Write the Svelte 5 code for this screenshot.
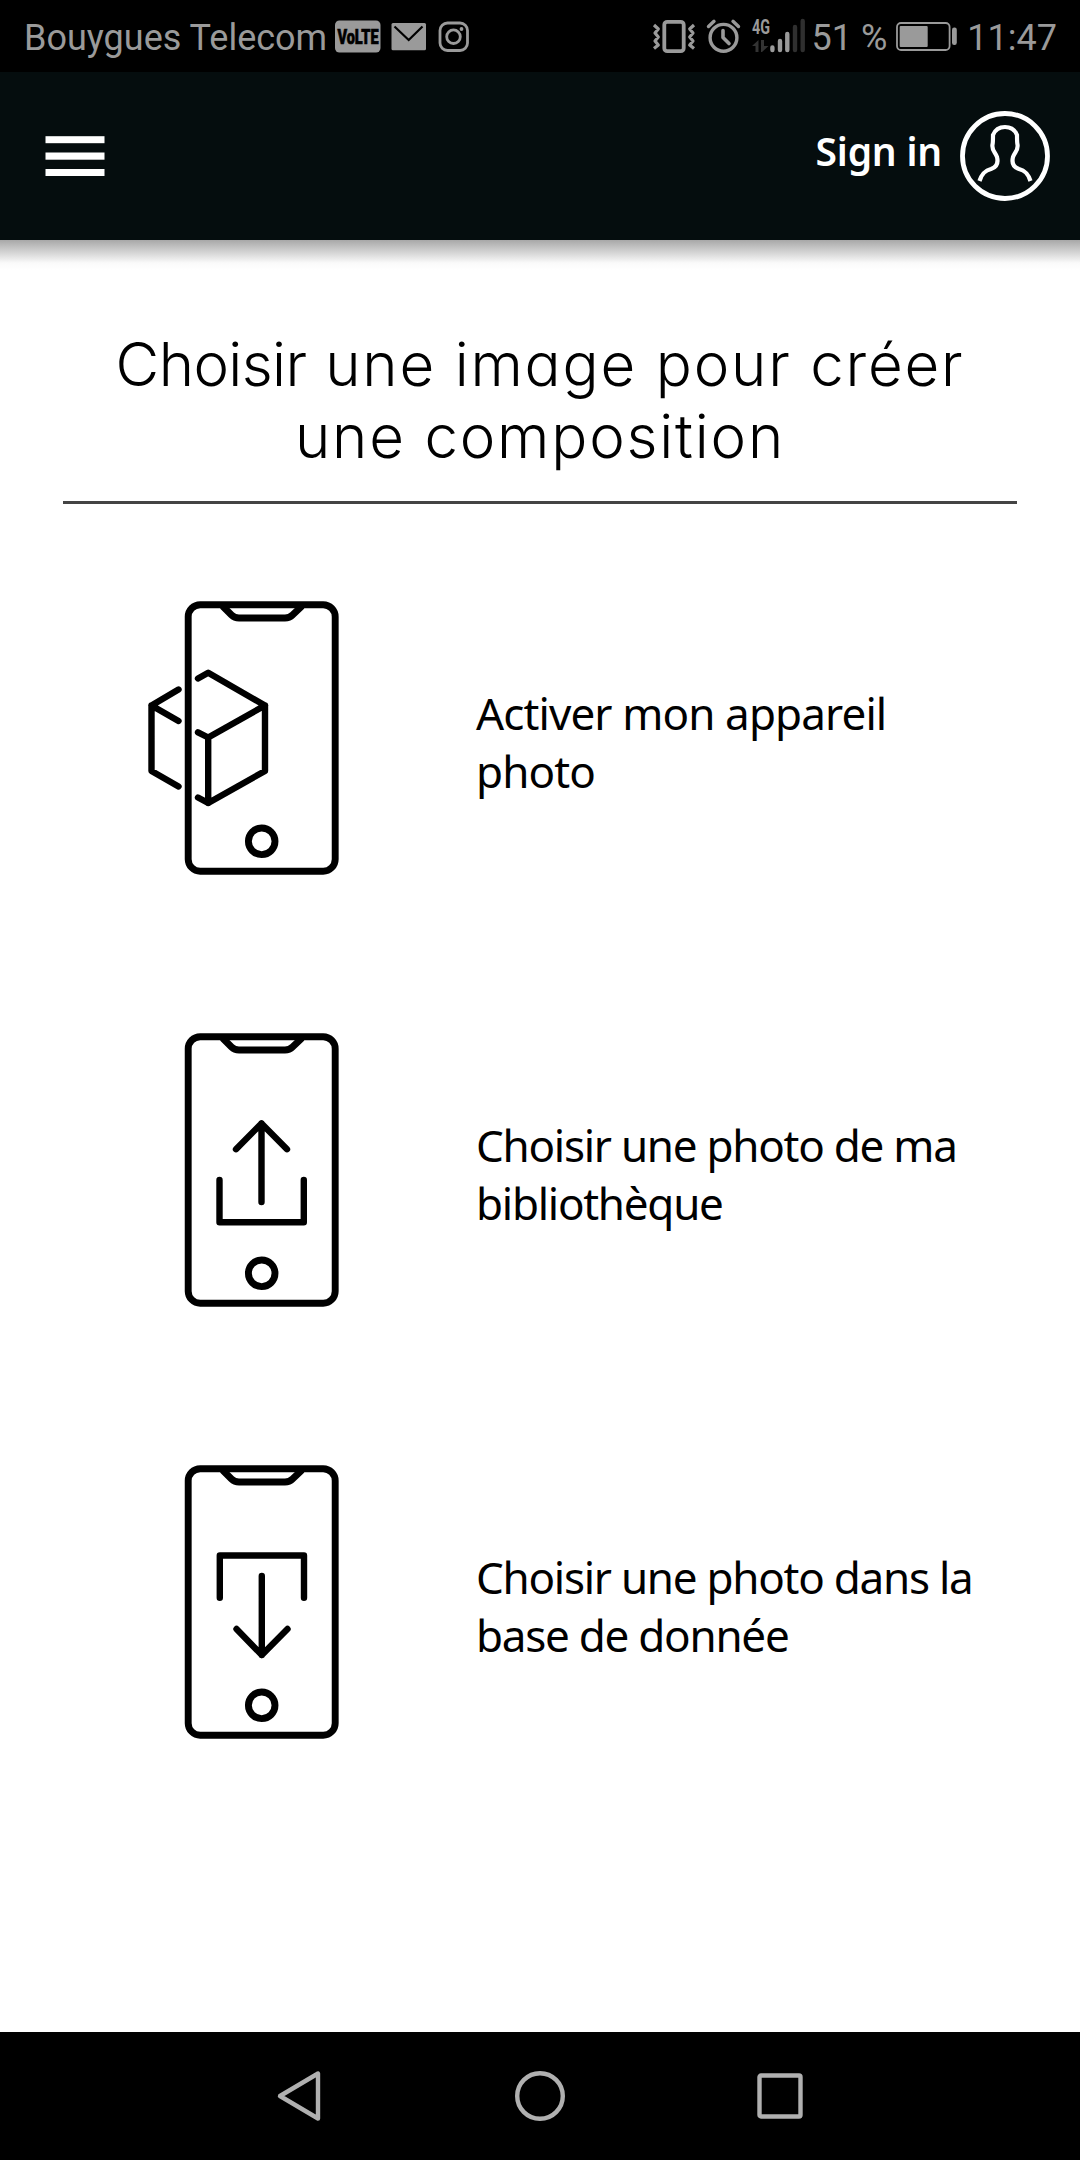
<script>
  const options = [
    { id: 'camera', lines: ['Activer mon appareil', 'photo'] },
    { id: 'upload', lines: ['Choisir une photo de ma', 'bibliothèque'] },
    { id: 'download', lines: ['Choisir une photo dans la', 'base de donnée'] }
  ];
</script>

<div class="screen">
  <div class="status">
    <span>Bouygues Telecom</span>
    <svg class="left-icons" width="140" height="72" viewBox="332 0 140 72">
      <rect x="335" y="20.5" width="45.5" height="32" rx="4.5" fill="#9a9a9a" />
      <text x="337.5" y="43.7" textLength="41" lengthAdjust="spacingAndGlyphs" class="volte">VoLTE</text>
      <rect x="391.5" y="23" width="34.5" height="27.2" rx="1.5" fill="#9a9a9a" />
      <path d="M394.5 26.5 408.7 40 422.5 26.5" fill="none" stroke="#000" stroke-width="2.2" />
      <g fill="none" stroke="#9a9a9a" stroke-width="2.8">
        <rect x="440" y="23" width="27.5" height="27.5" rx="7.5" />
        <circle cx="453.5" cy="36.7" r="6.8" />
      </g>
      <circle cx="461.5" cy="29" r="1.9" fill="#9a9a9a" />
    </svg>
    <svg class="right-icons" width="156" height="72" viewBox="650 0 156 72">
      <g fill="none" stroke="#9a9a9a" stroke-width="3.2" stroke-linejoin="round">
        <rect x="664.3" y="21.8" width="19.4" height="29.4" rx="3" stroke-width="3.8" />
        <path d="M654 25 658.3 29 655 33 658.3 37 655 41 658.3 45 654 48.5M694 25 689.7 29 693 33 689.7 37 693 41 689.7 45 694 48.5" />
        <circle cx="723.5" cy="37.8" r="13.4" stroke-width="3.4" />
        <path d="M723 30.5V37.5L729 43.5" stroke-width="3.6" stroke-linecap="round" />
        <path d="M708.5 26.5 714 21.3M738.5 26.5 733 21.3" stroke-width="3.4" stroke-linecap="round" />
      </g>
      <text x="752" y="33.5" textLength="18" lengthAdjust="spacingAndGlyphs" class="net">4G</text>
      <path d="M752 46 758.5 40V52H755.5V46ZM761 40H764V46L768.5 46 762 52H761Z" fill="#333" />
      <g stroke-width="4.4" stroke-linecap="round">
        <path d="M772.4 47.5V50M780 41V50M787.3 34V50" stroke="#9a9a9a" />
        <path d="M795 27V50M802.7 21V50" stroke="#2f2f2f" />
      </g>
    </svg>
    <span class="pct">51 %</span>
    <svg width="64" height="72" viewBox="895 0 64 72">
      <rect x="897" y="23" width="52.6" height="27" rx="4" fill="none" stroke="#9a9a9a" stroke-width="1.8" />
      <rect x="899.7" y="26" width="28" height="21" rx="1" fill="#9a9a9a" />
      <rect x="952" y="27.5" width="4.8" height="17.5" rx="2.2" fill="#9a9a9a" />
    </svg>
    <span class="time">11:47</span>
  </div>

  <header>
    <svg width="60" height="42" viewBox="0 0 60 42" fill="#fff">
      <rect x=".5" y="1.2" width="59" height="7" /><rect x=".5" y="17.5" width="59" height="7.2" /><rect x=".5" y="34" width="59" height="7" />
    </svg>
    <div class="account">
      <span>Sign in</span>
      <svg width="92" height="92" viewBox="-46 -46 92 92" fill="none" stroke="#fff">
        <circle r="42.5" stroke-width="4.8" />
        <path d="M-25.5 25C-23 17 -19.5 14.5 -14 13C-8 11 -6.5 7 -8 1C-10 -4 -13.5 -6 -12.5 -11.5C-12 -13 -12 -15 -12 -21C-10 -26 -6 -29 0 -29C6 -29 10 -26 12 -21C12 -15 12 -13 12.5 -11.5C13.5 -6 10 -4 8 1C6.5 7 8 11 14 13C19.5 14.5 23 17 25.5 25" stroke-width="4.2" />
      </svg>
    </div>
  </header>

  <main>
    <h1><span class="tight">Choisir</span> une image pour créer<br />une composition</h1>
    <ul>
      {#each options as option (option.id)}
        <li>
          <svg width="240" height="310" viewBox="0 0 240 310" fill="none" stroke="#000" stroke-width="6.4" stroke-linecap="round" stroke-linejoin="round">
            <g stroke-width="6.9">
              <rect x="58.2" y="24.7" width="147" height="266.5" rx="12" />
              <path d="M92.5 26 101.5 35Q104.5 38 109 38H155Q159.5 38 162.5 35L172 26" stroke-linecap="butt" />
              <circle cx="131.7" cy="261.3" r="13.3" />
            </g>
            {#if option.id === 'camera'}
              <path d="M68 98.5 78.2 92.8 135 125.5 78.2 157.5 68 152.3M135 125.5V191L78.2 223 68 217.5M78.2 157.5V223M48.5 109.5 21.5 125.5 48.5 141M21.5 125.5V191L48.5 206.5" />
            {:else if option.id === 'upload'}
              <path d="M131.5 111.5V190M106 137.2 131.5 111.5 157 137.2M89.5 168V210.3H173.8V168" />
            {:else}
              <path d="M131.8 132V211M106.5 185 131.8 211 157.5 185M89.8 153.8V111.5H174V153.8" />
            {/if}
          </svg>
          <p>{option.lines[0]}<br />{option.lines[1]}</p>
        </li>
      {/each}
    </ul>
  </main>

  <nav>
    <svg width="46" height="52" viewBox="0 0 46 52"><path d="M42 3.5V48.5L4 26Z" /></svg>
    <svg width="50" height="50" viewBox="0 0 50 50"><circle cx="25" cy="25" r="22.8" /></svg>
    <svg width="46" height="46" viewBox="0 0 46 46"><rect x="2.5" y="2.5" width="41" height="41" rx="1.5" /></svg>
  </nav>
</div>

<style>
  :global(body) { margin: 0; background: #fff; }
  .screen { width: 1080px; height: 2160px; display: flex; flex-direction: column; font-family: 'Noto Sans', sans-serif; color: #000; }
  svg { display: block; flex: none; }
  .status { height: 72px; background: #000; color: #9a9a9a; display: flex; align-items: center; font: 36px/72px Roboto, sans-serif; padding: 0 23px 0 24px; box-sizing: border-box; white-space: nowrap; }
  .status span { padding-top: 3px; }
  .left-icons { margin-left: 5px; }
  .right-icons { margin-left: auto; }
  .pct { margin: 0 8px 0 6px; }
  .time { margin-left: 8px; }
  .volte { font: 900 20px Roboto, sans-serif; fill: #000; stroke: #000; stroke-width: 0.7px; }
  .net { font: 700 20px Roboto, sans-serif; fill: #9a9a9a; }
  header { height: 168px; background: #050d0e; display: flex; align-items: center; justify-content: space-between; padding: 0 29px 0 45px; box-sizing: border-box; color: #fff; }
  .account { display: flex; align-items: center; gap: 17px; font-size: 39px; font-weight: 600; letter-spacing: -0.2px; }
  .account span { padding-bottom: 12px; }
  main { flex: 1; background: linear-gradient(#a8a8a8, #fafafa 23px, #fff 30px); }
  h1 { margin: 88px 63px 0; font: 300 60px/72px Inter, sans-serif; font-feature-settings: 'cv11'; letter-spacing: 1.8px; text-align: center; border-bottom: 3px solid #444; padding-bottom: 29px; }
  .tight { letter-spacing: -0.6px; }
  ul { list-style: none; margin: 15px 0 0; padding: 0; }
  li { height: 432px; padding: 0 0 0 130px; display: flex; align-items: center; }
  p { margin: 0 0 0 106px; padding-top: 14px; font-size: 44px; line-height: 58px; letter-spacing: -1.26px; white-space: nowrap; }
  li:first-child p { letter-spacing: -0.88px; }
  nav { height: 128px; background: #000; display: flex; align-items: center; justify-content: space-between; padding: 0 277px 0 276px; box-sizing: border-box; fill: none; stroke: #b0b0b0; stroke-width: 4.4; stroke-linejoin: round; }
</style>
